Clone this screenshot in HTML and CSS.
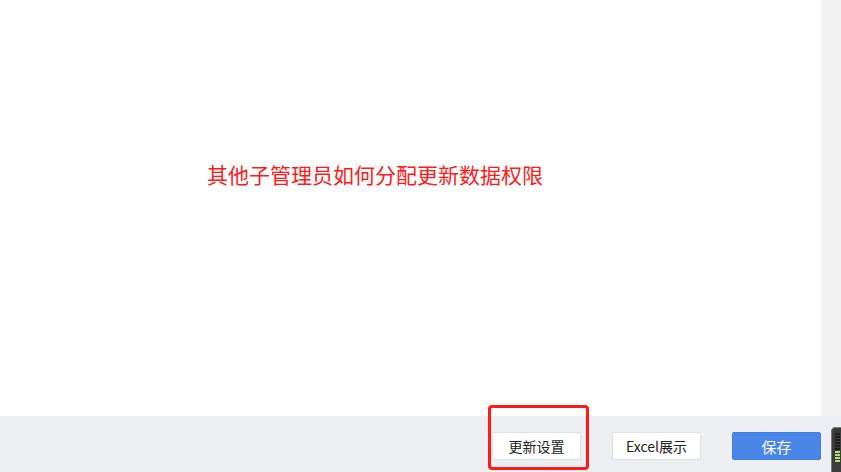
FILE: index.html
```html
<!DOCTYPE html>
<html lang="zh-CN">
<head>
    <meta charset="UTF-8">
    <meta name="viewport" content="width=device-width, initial-scale=1.0">
    <title>更新设置</title>
    <link rel="stylesheet" href="styles.css">
</head>
<body>
    <div class="page">
        <div class="main">
            <div class="content">
                <p class="note">其他子管理员如何分配更新数据权限</p>
            </div>
            <div class="scrollbar"></div>
        </div>
        <div class="footer">
            <div class="actions">
                <button type="button" class="btn">更新设置</button>
                <button type="button" class="btn">Excel展示</button>
                <button type="button" class="btn primary">保存</button>
            </div>
            <div class="mark"></div>
        </div>
        <div class="meter">
            <span></span><span></span><span></span><span></span><span></span><span></span>
            <span class="on"></span><span class="on"></span><span class="on"></span><span class="on"></span>
        </div>
    </div>
</body>
</html>
```

FILE: styles.css
```css
html, body {
    margin: 0;
    padding: 0;
}
body {
    width: 841px;
    height: 472px;
    overflow: hidden;
    background-color: #eeeff3;
    font-family: "Microsoft YaHei", "Noto Sans CJK SC", "Noto Sans", sans-serif;
}
.page {
    position: relative;
    display: flex;
    flex-direction: column;
    height: 100%;
}
.main {
    display: flex;
    flex-direction: row;
    height: 416px;
}
.content {
    flex: 1;
    background-color: #ffffff;
    padding: 160px 0 0 207px;
    box-sizing: border-box;
}
.note {
    margin: 0;
    color: #ff1a1a;
    font-size: 21px;
    line-height: 28px;
}
.scrollbar {
    width: 20px;
    background-color: #f2f2f2;
}
.footer {
    flex: 1;
    display: flex;
    flex-direction: row;
    justify-content: flex-end;
    padding: 16px 20px 0 0;
    box-sizing: border-box;
}
.actions {
    display: flex;
    flex-direction: row;
    gap: 31px;
    height: 28px;
}
.btn {
    width: 89px;
    height: 28px;
    border: 1px solid #dcdfe6;
    border-radius: 2px;
    background-color: #ffffff;
    color: #222222;
    font-family: inherit;
    font-size: 14px;
    padding: 0;
    cursor: pointer;
}
.btn.primary {
    background-color: #4a86e8;
    border-color: #3f7fe6;
    color: #ffffff;
    font-size: 15px;
}
.mark {
    position: absolute;
    left: 488px;
    top: 405px;
    width: 101px;
    height: 65px;
    box-sizing: border-box;
    border: 3px solid #ff1a1a;
    border-radius: 4px;
}
.meter {
    position: absolute;
    left: 831px;
    top: 427px;
    width: 12px;
    height: 50px;
    box-sizing: border-box;
    padding: 5px 2px 0 3px;
    background-color: #3c3c3c;
    border: 1px solid #7a7a7a;
    border-radius: 4px 0 0 0;
    display: flex;
    flex-direction: column;
    gap: 1px;
}
.meter span {
    display: block;
    height: 2px;
    background-color: #1e1e1e;
}
.meter span.on {
    background-color: #a8e07a;
}
```
